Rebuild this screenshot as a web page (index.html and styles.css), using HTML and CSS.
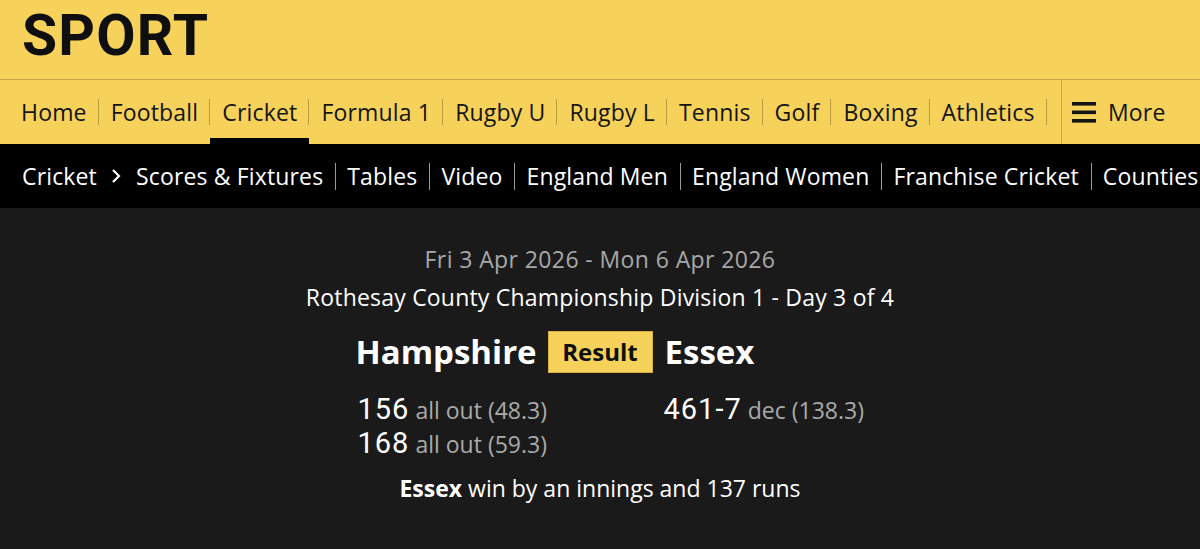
FILE: index.html
```html
<!DOCTYPE html>
<html lang="en">
<head>
<meta charset="utf-8">
<title>Hampshire v Essex - BBC Sport</title>
<link rel="stylesheet" href="styles.css">
</head>
<body>
<header class="masthead">
  <div class="brand">SPORT</div>
</header>
<nav class="primary">
  <ul class="primary-list">
    <li class="pitem"><a>Home</a></li>
    <li class="pitem"><a>Football</a></li>
    <li class="pitem active"><a>Cricket</a></li>
    <li class="pitem"><a>Formula 1</a></li>
    <li class="pitem"><a>Rugby U</a></li>
    <li class="pitem"><a>Rugby L</a></li>
    <li class="pitem"><a>Tennis</a></li>
    <li class="pitem"><a>Golf</a></li>
    <li class="pitem"><a>Boxing</a></li>
    <li class="pitem"><a>Athletics</a></li>
  </ul>
  <div class="more">
    <svg class="burger" width="24" height="21" viewBox="0 0 24 21" aria-hidden="true">
      <rect x="0" y="0" width="24" height="3.6" fill="#141414"/>
      <rect x="0" y="8.5" width="24" height="3.6" fill="#141414"/>
      <rect x="0" y="17" width="24" height="3.6" fill="#141414"/>
    </svg>
    <span>More</span>
  </div>
</nav>
<nav class="secondary">
  <a class="crumb">Cricket</a>
  <svg class="chevron" width="12" height="16" viewBox="0 0 12 16" aria-hidden="true">
    <polyline points="3,2 9,8 3,14" fill="none" stroke="#fff" stroke-width="2.2"/>
  </svg>
  <ul class="sub-list">
    <li class="sitem">Scores &amp; Fixtures</li>
    <li class="sitem">Tables</li>
    <li class="sitem">Video</li>
    <li class="sitem">England Men</li>
    <li class="sitem">England Women</li>
    <li class="sitem">Franchise Cricket</li>
    <li class="sitem last">Counties</li>
  </ul>
</nav>
<main class="match">
  <p class="dates">Fri 3 Apr 2026 - Mon 6 Apr 2026</p>
  <p class="comp">Rothesay County Championship Division 1 - Day 3 of 4</p>
  <div class="board">
    <h2 class="team home">Hampshire</h2>
    <span class="badge">Result</span>
    <h2 class="team away">Essex</h2>
    <div class="scores home-scores">
      <div class="inn"><span class="runs">156</span><span class="detail">all out (48.3)</span></div>
      <div class="inn"><span class="runs">168</span><span class="detail">all out (59.3)</span></div>
    </div>
    <div class="spacer"></div>
    <div class="scores away-scores">
      <div class="inn"><span class="runs">461-7</span><span class="detail">dec (138.3)</span></div>
    </div>
  </div>
  <p class="summary"><b>Essex</b> win by an innings and 137 runs</p>
</main>
</body>
</html>
```

FILE: styles.css
```css
* { box-sizing: border-box; }

html, body {
  margin: 0;
  padding: 0;
}

body {
  width: 1200px;
  height: 549px;
  overflow: hidden;
  background: #1a1a1a;
  font-family: "Open Sans", "Noto Sans", sans-serif;
}

.masthead {
  height: 80px;
  background: #f6d25b;
  border-bottom: 1px solid #c6a73c;
  padding: 0 0 0 22px;
}

.brand {
  font-family: Roboto, "Open Sans", sans-serif;
  font-size: 57px;
  line-height: 71px;
  font-weight: 700;
  color: #0f0f0f;
  letter-spacing: 1.2px;
}

.primary {
  display: flex;
  height: 64px;
  background: #f6d25b;
  color: #141414;
  font-size: 23px;
  letter-spacing: 0.17px;
}

.primary-list {
  display: flex;
  flex: 1;
  min-width: 0;
  margin: 0;
  padding: 0 0 0 9px;
  list-style: none;
  overflow: hidden;
}

.pitem {
  display: flex;
  align-items: center;
  flex: none;
  padding-left: 12px;
}

.pitem::after {
  content: "";
  width: 1px;
  height: 26px;
  margin-left: 11px;
  background: #b79b3e;
}

.pitem.active {
  box-shadow: inset 0 -6px 0 #000;
}

.more {
  flex: 0 0 139px;
  display: flex;
  align-items: center;
  gap: 12px;
  padding-left: 10px;
  border-left: 1px solid #c6a73c;
}

.burger {
  display: block;
}

.secondary {
  display: flex;
  align-items: center;
  height: 64px;
  background: #000;
  color: #fff;
  font-size: 23px;
  letter-spacing: 0.15px;
  padding-left: 22px;
  white-space: nowrap;
  overflow: hidden;
}

.chevron {
  flex: none;
  margin: 0 14px 0 13px;
}

.sub-list {
  display: flex;
  margin: 0;
  padding: 0;
  list-style: none;
}

.sitem {
  display: flex;
  align-items: center;
  flex: none;
}

.sitem::after {
  content: "";
  width: 1px;
  height: 27px;
  margin: 0 11px 0 12px;
  background: #9a9a9a;
}

.sitem.last::after {
  display: none;
}

.match {
  padding-top: 36px;
  text-align: center;
  color: #fff;
}

.dates {
  margin: 0;
  font-size: 23px;
  line-height: 30px;
  letter-spacing: 0.4px;
  color: #a8a8a8;
}

.comp {
  margin: 8px 0 0;
  font-size: 23px;
  line-height: 30px;
  letter-spacing: 0.2px;
}

.board {
  width: 489px;
  margin: 17px auto 0;
  display: grid;
  grid-template-columns: minmax(0, 1fr) auto minmax(0, 1fr);
  column-gap: 12px;
  align-items: center;
}

.team {
  margin: 0;
  font-size: 33px;
  line-height: 46px;
  font-weight: 700;
  white-space: nowrap;
}

.team.home { text-align: right; }
.team.away { text-align: left; }

.badge {
  display: block;
  width: 105px;
  height: 42px;
  line-height: 40px;
  background: #f6d25b;
  border: 1px solid #d7b444;
  color: #0f0f0f;
  font-size: 24px;
  font-weight: 700;
  text-align: center;
}

.scores {
  margin-top: 17px;
  text-align: left;
  white-space: nowrap;
  align-self: start;
}

.home-scores { padding-left: 2px; }
.away-scores { margin-left: -1px; }

.inn {
  display: flex;
  align-items: baseline;
  column-gap: 6px;
  height: 34px;
}

.runs {
  font-family: Roboto, "Open Sans", sans-serif;
  font-size: 29px;
  line-height: 34px;
  letter-spacing: 1px;
}

.detail {
  font-size: 23px;
  line-height: 32px;
  color: #aaaaaa;
}

.summary {
  margin: 13px 0 0;
  font-size: 23px;
  line-height: 30px;
}

.summary b {
  font-weight: 700;
}
```
